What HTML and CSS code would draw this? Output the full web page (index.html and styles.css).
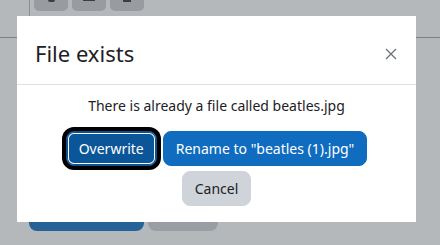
FILE: index.html
```html
<!DOCTYPE html>
<html lang="en">
<head>
    <meta charset="UTF-8">
    <meta name="viewport" content="width=device-width, initial-scale=1.0">
    <title>File exists</title>
    <link rel="stylesheet" href="styles.css">
</head>
<body>
    <!-- page behind the backdrop -->
    <div class="page">
        <div class="picker">
            <div class="toolbar">
                <span class="tool"><i class="glyph round"></i></span>
                <span class="tool"><i class="glyph bar"></i></span>
                <span class="tool"><i class="glyph box"></i></span>
            </div>
        </div>
        <div class="rule"></div>
        <div class="actions">
            <span class="act primary"></span>
            <span class="act secondary"></span>
        </div>
    </div>

    <div class="modal" role="dialog">
        <div class="modal-header">
            <h5 class="modal-title">File exists</h5>
            <button class="close" aria-label="Close">
                <svg width="12" height="12" viewBox="0 0 12 12">
                    <path d="M1 1L11 11M11 1L1 11" stroke="#6a737b" stroke-width="1.3" fill="none"/>
                </svg>
            </button>
        </div>
        <div class="modal-body">
            <p class="message">There is already a file called beatles.jpg</p>
            <div class="btn-row">
                <button class="btn btn-primary focused">Overwrite</button>
                <button class="btn btn-primary">Rename to "beatles (1).jpg"</button>
            </div>
            <div class="btn-row">
                <button class="btn btn-secondary">Cancel</button>
            </div>
        </div>
    </div>
</body>
</html>
```

FILE: styles.css
```css
body {
    margin: 0;
    height: 245px;
    overflow: hidden;
    background: #b5b8bb;
    font-family: 'Noto Sans', 'Open Sans', sans-serif;
    color: #1d2125;
}

/* Background page (already dimmed by the backdrop) */
.page {
    display: flex;
    flex-direction: column;
    height: 245px;
}

.picker {
    margin-left: 29px;
    height: 37px;
    border-left: 1px solid #8b8f93;
}

.toolbar {
    display: flex;
    gap: 4px;
    padding-left: 4px;
}

.tool {
    width: 34px;
    height: 11px;
    background: #989ca1;
    border-radius: 0 0 5px 5px;
    display: flex;
    justify-content: center;
}

.glyph {
    display: block;
    background: #3b3f44;
}

.glyph.round { width: 7px; height: 2px; border-radius: 0 0 4px 4px; }
.glyph.bar { width: 12px; height: 1px; }
.glyph.box { width: 8px; height: 2px; }

.rule {
    height: 1px;
    background: #7d8185;
}

.actions {
    margin-top: auto;
    margin-bottom: 14px;
    margin-left: 29px;
    display: flex;
    gap: 4px;
}

.act {
    height: 10px;
    border-radius: 0 0 8px 8px;
}

.act.primary { width: 115px; background: #256298; }
.act.secondary { width: 70px; background: #999ea5; }

/* Dialog */
.modal {
    position: absolute;
    left: 17px;
    top: 16px;
    width: 399px;
    height: 206px;
    background: #fff;
}

.modal-header {
    height: 69px;
    box-sizing: border-box;
    border-bottom: 1px solid #dee2e6;
    padding: 0 18px;
    display: flex;
    align-items: center;
    justify-content: space-between;
}

.modal-title {
    margin: 7px 0 0;
    font-size: 22px;
    font-weight: 400;
    line-height: 1.2;
}

.close {
    border: none;
    background: none;
    padding: 0;
    margin: 8px 1px 0 0;
    width: 12px;
    height: 12px;
    display: flex;
}

.modal-body {
    padding: 10px 16px 0;
}

.message {
    margin: 0 0 14px;
    text-align: center;
    font-size: 14px;
    line-height: 22px;
}

.btn-row {
    display: flex;
    justify-content: center;
    gap: 6px;
    margin-bottom: 5px;
}

.btn {
    font-family: inherit;
    font-size: 14px;
    line-height: 22px;
    height: 35px;
    padding: 0 12px;
    border: 1px solid transparent;
    border-radius: 8px;
    cursor: pointer;
}

.btn-primary {
    background: #0f6cbf;
    border-color: #0f6cbf;
    color: #fff;
}

.btn-primary.focused {
    background: #0b5699;
    border-color: #0b5190;
    box-shadow: inset 0 0 0 1px #0b5190, inset 0 0 0 2px #fff, 0 0 0 4px #000;
}

.btn-secondary {
    background: #ced4da;
    border-color: #ced4da;
    color: #1d2125;
}
```
